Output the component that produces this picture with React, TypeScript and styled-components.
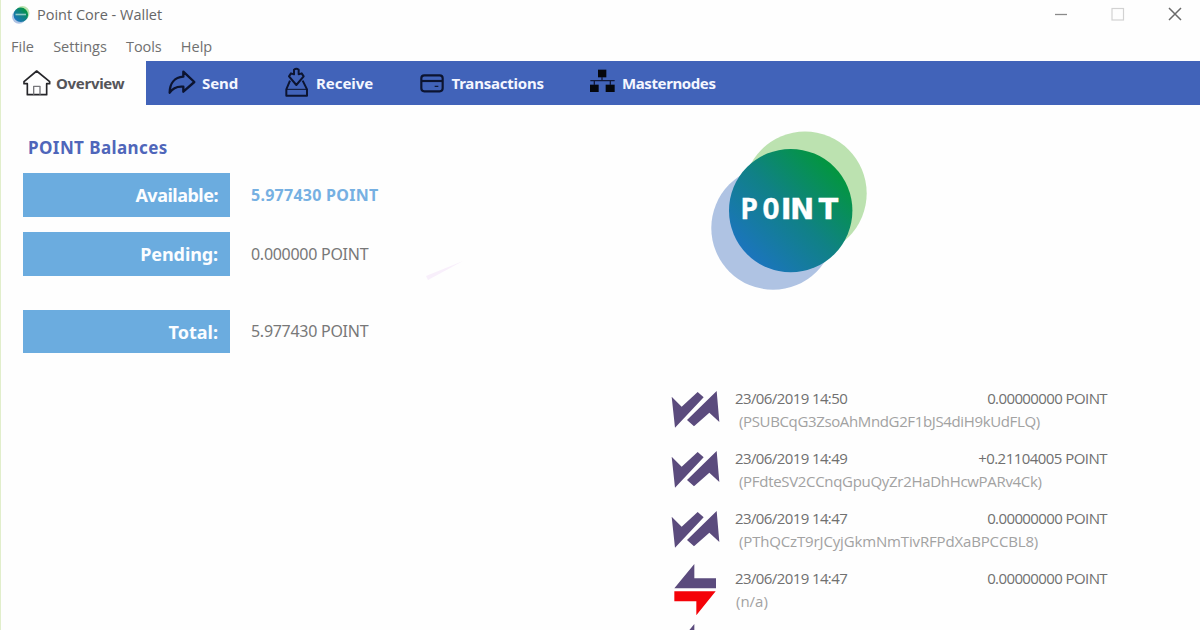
import React from 'react';
import styled, { createGlobalStyle } from 'styled-components';

const UI_FONT = '"Open Sans", "Noto Sans", sans-serif';
const BOLD_FONT = '"Noto Sans", "Open Sans", sans-serif';

const GlobalStyle = createGlobalStyle`
  * { box-sizing: border-box; }
  body { margin: 0; background: #fefefe; overflow: hidden; }
`;

const Window = styled.div`
  position: relative;
  display: flex;
  flex-direction: column;
  width: 1200px;
  height: 630px;
  overflow: hidden;
  background: #fefefe;
  border-left: 1px solid #e1eecb;
  font-family: ${UI_FONT};
  white-space: nowrap;
`;

const TitleBar = styled.header`
  display: flex;
  align-items: center;
  flex: none;
  height: 29px;
  padding-left: 10px;
  svg { display: block; }
`;

const Title = styled.h1`
  flex: 1;
  margin: 0 0 0 6px;
  font-size: 14.5px;
  font-weight: 400;
  line-height: 28px;
  color: #666;
`;

const WindowControls = styled.div`
  display: flex;
  align-items: center;
  gap: 43px;
  padding: 0 18px 1px 0;
`;

const MenuBar = styled.nav`
  display: flex;
  align-items: center;
  flex: none;
  height: 32px;
  padding: 3px 0 0 10px;
  gap: 19.2px;
`;

const MenuItem = styled.span<{ $spacing?: number }>`
  font-size: 14.5px;
  line-height: 26px;
  letter-spacing: ${(p) => p.$spacing ?? 0}px;
  color: #707070;
`;

const TabBar = styled.nav`
  display: flex;
  flex: none;
  height: 44px;
  background: #4163b9;
`;

const Tab = styled.div<{ $width: number; $pad: number; $gap: number; $active?: boolean }>`
  display: flex;
  align-items: center;
  width: ${(p) => p.$width}px;
  padding-left: ${(p) => p.$pad}px;
  gap: ${(p) => p.$gap}px;
  color: ${(p) => (p.$active ? '#55555a' : '#f4f6ff')};
  background: ${(p) => (p.$active ? '#fefefe' : 'transparent')};
  svg { display: block; flex: none; }
`;

const TabLabel = styled.span<{ $spacing: number }>`
  padding-bottom: 1px;
  font: bold 15px/24px ${BOLD_FONT};
  letter-spacing: ${(p) => p.$spacing}px;
`;

const Content = styled.main`
  display: flex;
  flex: 1;
  min-height: 0;
`;

const Balances = styled.section`
  width: 648px;
  padding: 31px 0 0 22px;
`;

const Heading = styled.h2`
  margin: 0 0 13px 5px;
  font: bold 17px/24px ${BOLD_FONT};
  letter-spacing: 0.42px;
  color: #4f66ba;
`;

const BalanceRow = styled.div<{ $after: number }>`
  display: flex;
  align-items: center;
  height: 43.5px;
  margin-bottom: ${(p) => p.$after}px;
`;

const BalanceLabel = styled.div<{ $spacing: number }>`
  width: 207px;
  height: 100%;
  padding-right: 12px;
  text-align: right;
  font: bold 18px/45px ${BOLD_FONT};
  letter-spacing: ${(p) => p.$spacing}px;
  color: #fbfdff;
  background: #6bacdf;
`;

const BalanceValue = styled.div<{ $strong?: boolean }>`
  margin-left: 21px;
  font: ${(p) => (p.$strong ? 'bold' : 'normal')} 16px/42px ${BOLD_FONT};
  letter-spacing: ${(p) => (p.$strong ? 0.26 : -0.28)}px;
  color: ${(p) => (p.$strong ? '#76b0e2' : '#787878')};
`;

const Side = styled.section`
  display: flex;
  flex-direction: column;
  width: 480px;
  padding: 23px 0 0 22px;
`;

const LogoBox = styled.div`
  flex: none;
  height: 252px;
  padding-left: 37px;
  svg { display: block; }
`;

const TxRow = styled.div`
  display: flex;
  flex: none;
  height: 60px;
  svg { display: block; flex: none; }
`;

const TxBody = styled.div`
  width: 386px;
  padding: 7px 0 0 14px;
`;

const TxTop = styled.div`
  display: flex;
  justify-content: space-between;
  font-size: 15px;
  line-height: 23px;
  color: #707070;
`;

const Spaced = styled.span<{ $spacing: number }>`
  letter-spacing: ${(p) => p.$spacing}px;
`;

const TxAddress = styled.div<{ $spacing: number; $indent: number }>`
  padding-left: ${(p) => p.$indent}px;
  font-size: 15px;
  line-height: 23px;
  letter-spacing: ${(p) => p.$spacing}px;
  color: #a2a2a2;
`;

const Streak = styled.svg`
  position: absolute;
  left: 424px;
  top: 258px;
`;

const LogoGradient = ({ id }: { id: string }) => (
  <defs>
    <linearGradient id={id} x1="0.15" y1="0.85" x2="0.85" y2="0.15">
      <stop offset="0" stopColor="#1b75bc" />
      <stop offset="0.5" stopColor="#108186" />
      <stop offset="1" stopColor="#03963f" />
    </linearGradient>
  </defs>
);

const LogoText = styled.text`
  font: 700 29px "DejaVu Sans Mono", monospace;
  fill: #fff;
`;

const LogoNarrow = styled.tspan`
  font-family: "DejaVu Sans", sans-serif;
  font-size: 29px;
`;

const PointLogo = () => (
  <svg width="160" height="164" viewBox="708 128 160 164">
    <LogoGradient id="logo" />
    <circle cx="805" cy="193.3" r="61.7" fill="#bce2b0" />
    <circle cx="773" cy="228" r="61.7" fill="#afc3e3" />
    <circle cx="790.7" cy="210.6" r="61.7" fill="url(#logo)" />
    <LogoText y="218.7" stroke="#fff" strokeWidth="0.3">
      <tspan x="740.5">P</tspan>
      <tspan x="762.3">O</tspan>
      <LogoNarrow x="780.8">I</LogoNarrow>
      <LogoNarrow x="790">N</LogoNarrow>
      <LogoNarrow x="818.5">T</LogoNarrow>
    </LogoText>
  </svg>
);

const AppIcon = () => (
  <svg width="20" height="20" viewBox="0 0 20 20">
    <LogoGradient id="app" />
    <circle cx="11.5" cy="8" r="7" fill="#bce2b0" />
    <circle cx="8" cy="11.8" r="7" fill="#afc3e3" />
    <circle cx="9.8" cy="9.8" r="7.3" fill="url(#app)" />
    <path d="M4.5 9.5h10.5" stroke="#8fc9c4" strokeWidth="1.6" />
  </svg>
);

const HomeIcon = () => (
  <svg width="28" height="44" viewBox="69 183 84 132" fill="none" stroke="#26262a" strokeWidth="5" strokeLinejoin="round">
    <path d="M110 213L72 245V251H82V284H140V251H149V245Z" />
    <path d="M101 284V259H120V284" stroke="#77777b" strokeWidth="4" />
  </svg>
);

const SendIcon = () => (
  <svg width="28" height="44" viewBox="504 183 84 132" fill="none" stroke="#0c1430" strokeWidth="7" strokeLinejoin="round">
    <path d="M550 215L583 246L550 275V260C530 258 518 264 509 278C509 250 524 232 550 230Z" />
  </svg>
);

const ReceiveIcon = () => (
  <svg width="24" height="44" viewBox="75 18 72 132" fill="none" stroke="#0c1430" strokeWidth="6" strokeLinejoin="round">
    <path d="M90 77L79 103V122H141V103L128 77" />
    <path d="M80 103H140" strokeWidth="3" />
    <path d="M102 58V44Q109 38 116 44V58L125 55L131 64L109 90L87 64L93 55Z" />
  </svg>
);

const CardIcon = () => (
  <svg width="24" height="44" viewBox="480 18 72 132" fill="none" stroke="#0c1430" strokeWidth="6.5">
    <rect x="484" y="61" width="64" height="48" rx="9" />
    <path d="M484 78H548" />
    <path d="M524 94H535" strokeWidth="3.5" />
  </svg>
);

const NodesIcon = () => (
  <svg width="28" height="44" viewBox="84 18 84 132" fill="#05070d">
    <rect x="114" y="44" width="25" height="23" />
    <rect x="90" y="89" width="26" height="22" />
    <rect x="137" y="89" width="27" height="22" />
    <path d="M126 66V77M91 77H164M103 77V90M151 77V90" fill="none" stroke="#121a3c" strokeWidth="4" />
  </svg>
);

const TransferIcon = () => (
  <svg width="50" height="60" viewBox="63 0 150 180" fill="#5b4b7d">
    <path d="M65 50L95 80L143 36L161 52L75 143Z" />
    <path d="M111 120L200 33L208 126L178 98L132 139Z" />
  </svg>
);

const MixedIcon = () => (
  <svg width="50" height="60" viewBox="63 0 150 180">
    <path d="M133 12V55H198V85H73Z" fill="#5b4b7d" />
    <path d="M73 94H197L139 166V124H73Z" fill="#f40208" />
  </svg>
);

const tabs = [
  { label: 'Overview', icon: <HomeIcon />, width: 145, pad: 22, gap: 5, spacing: -0.3, active: true },
  { label: 'Send', icon: <SendIcon />, width: 116, pad: 22, gap: 6, spacing: -0.1 },
  { label: 'Receive', icon: <ReceiveIcon />, width: 136, pad: 23, gap: 7, spacing: -0.05 },
  { label: 'Transactions', icon: <CardIcon />, width: 168, pad: 22, gap: 7.5, spacing: -0.22 },
  { label: 'Masternodes', icon: <NodesIcon />, width: 160, pad: 22, gap: 6, spacing: -0.4 },
];

const balances = [
  { label: 'Available:', value: '5.977430 POINT', spacing: -0.5, after: 15.5, strong: true },
  { label: 'Pending:', value: '0.000000 POINT', spacing: -0.1, after: 34 },
  { label: 'Total:', value: '5.977430 POINT', spacing: 0, after: 0 },
];

const transactions = [
  { date: '23/06/2019 14:50', amount: '0.00000000 POINT', as: -0.6, address: '(PSUBCqG3ZsoAhMndG2F1bJS4diH9kUdFLQ)', spacing: -0.36, indent: 4 },
  { date: '23/06/2019 14:49', amount: '+0.21104005 POINT', as: -0.54, address: '(PFdteSV2CCnqGpuQyZr2HaDhHcwPARv4Ck)', spacing: -0.31, indent: 4 },
  { date: '23/06/2019 14:47', amount: '0.00000000 POINT', as: -0.6, address: '(PThQCzT9rJCyjGkmNmTivRFPdXaBPCCBL8)', spacing: -0.15, indent: 4 },
  { date: '23/06/2019 14:47', amount: '0.00000000 POINT', as: -0.6, address: '(n/a)', spacing: 0, indent: 1, mixed: true },
];

export default function App() {
  return (
    <Window>
      <GlobalStyle />
      <TitleBar>
        <AppIcon />
        <Title>Point Core - Wallet</Title>
        <WindowControls>
          <svg width="14" height="14" viewBox="0 0 14 14" stroke="#8a8a8a" strokeWidth="1.3"><path d="M1 7.5H13" /></svg>
          <svg width="14" height="14" viewBox="0 0 14 14" fill="none" stroke="#d2d2d2" strokeWidth="1.2"><rect x="1" y="1.5" width="11.5" height="11.5" /></svg>
          <svg width="14" height="14" viewBox="0 0 14 14" stroke="#6a6a6a" strokeWidth="1.5"><path d="M1 1L13 13M13 1L1 13" /></svg>
        </WindowControls>
      </TitleBar>
      <MenuBar>
        <MenuItem>File</MenuItem>
        <MenuItem>Settings</MenuItem>
        <MenuItem $spacing={-0.1}>Tools</MenuItem>
        <MenuItem>Help</MenuItem>
      </MenuBar>
      <TabBar>
        {tabs.map((t) => (
          <Tab key={t.label} $width={t.width} $pad={t.pad} $gap={t.gap} $active={t.active}>
            {t.icon}
            <TabLabel $spacing={t.spacing}>{t.label}</TabLabel>
          </Tab>
        ))}
      </TabBar>
      <Content>
        <Balances>
          <Heading>POINT Balances</Heading>
          {balances.map((b) => (
            <BalanceRow key={b.label} $after={b.after}>
              <BalanceLabel $spacing={b.spacing}>{b.label}</BalanceLabel>
              <BalanceValue $strong={b.strong}>{b.value}</BalanceValue>
            </BalanceRow>
          ))}
        </Balances>
        <Side>
          <LogoBox><PointLogo /></LogoBox>
          {transactions.map((t, i) => (
            <TxRow key={i}>
              {t.mixed ? <MixedIcon /> : <TransferIcon />}
              <TxBody>
                <TxTop>
                  <Spaced $spacing={-0.6}>{t.date}</Spaced>
                  <Spaced $spacing={t.as}>{t.amount}</Spaced>
                </TxTop>
                <TxAddress $spacing={t.spacing} $indent={t.indent}>{t.address}</TxAddress>
              </TxBody>
            </TxRow>
          ))}
          <TxRow><MixedIcon /></TxRow>
        </Side>
      </Content>
      <Streak width="42" height="24" viewBox="0 0 42 24">
        <path d="M1 18L38 3L3 22Z" fill="#f8effb" />
      </Streak>
    </Window>
  );
}
